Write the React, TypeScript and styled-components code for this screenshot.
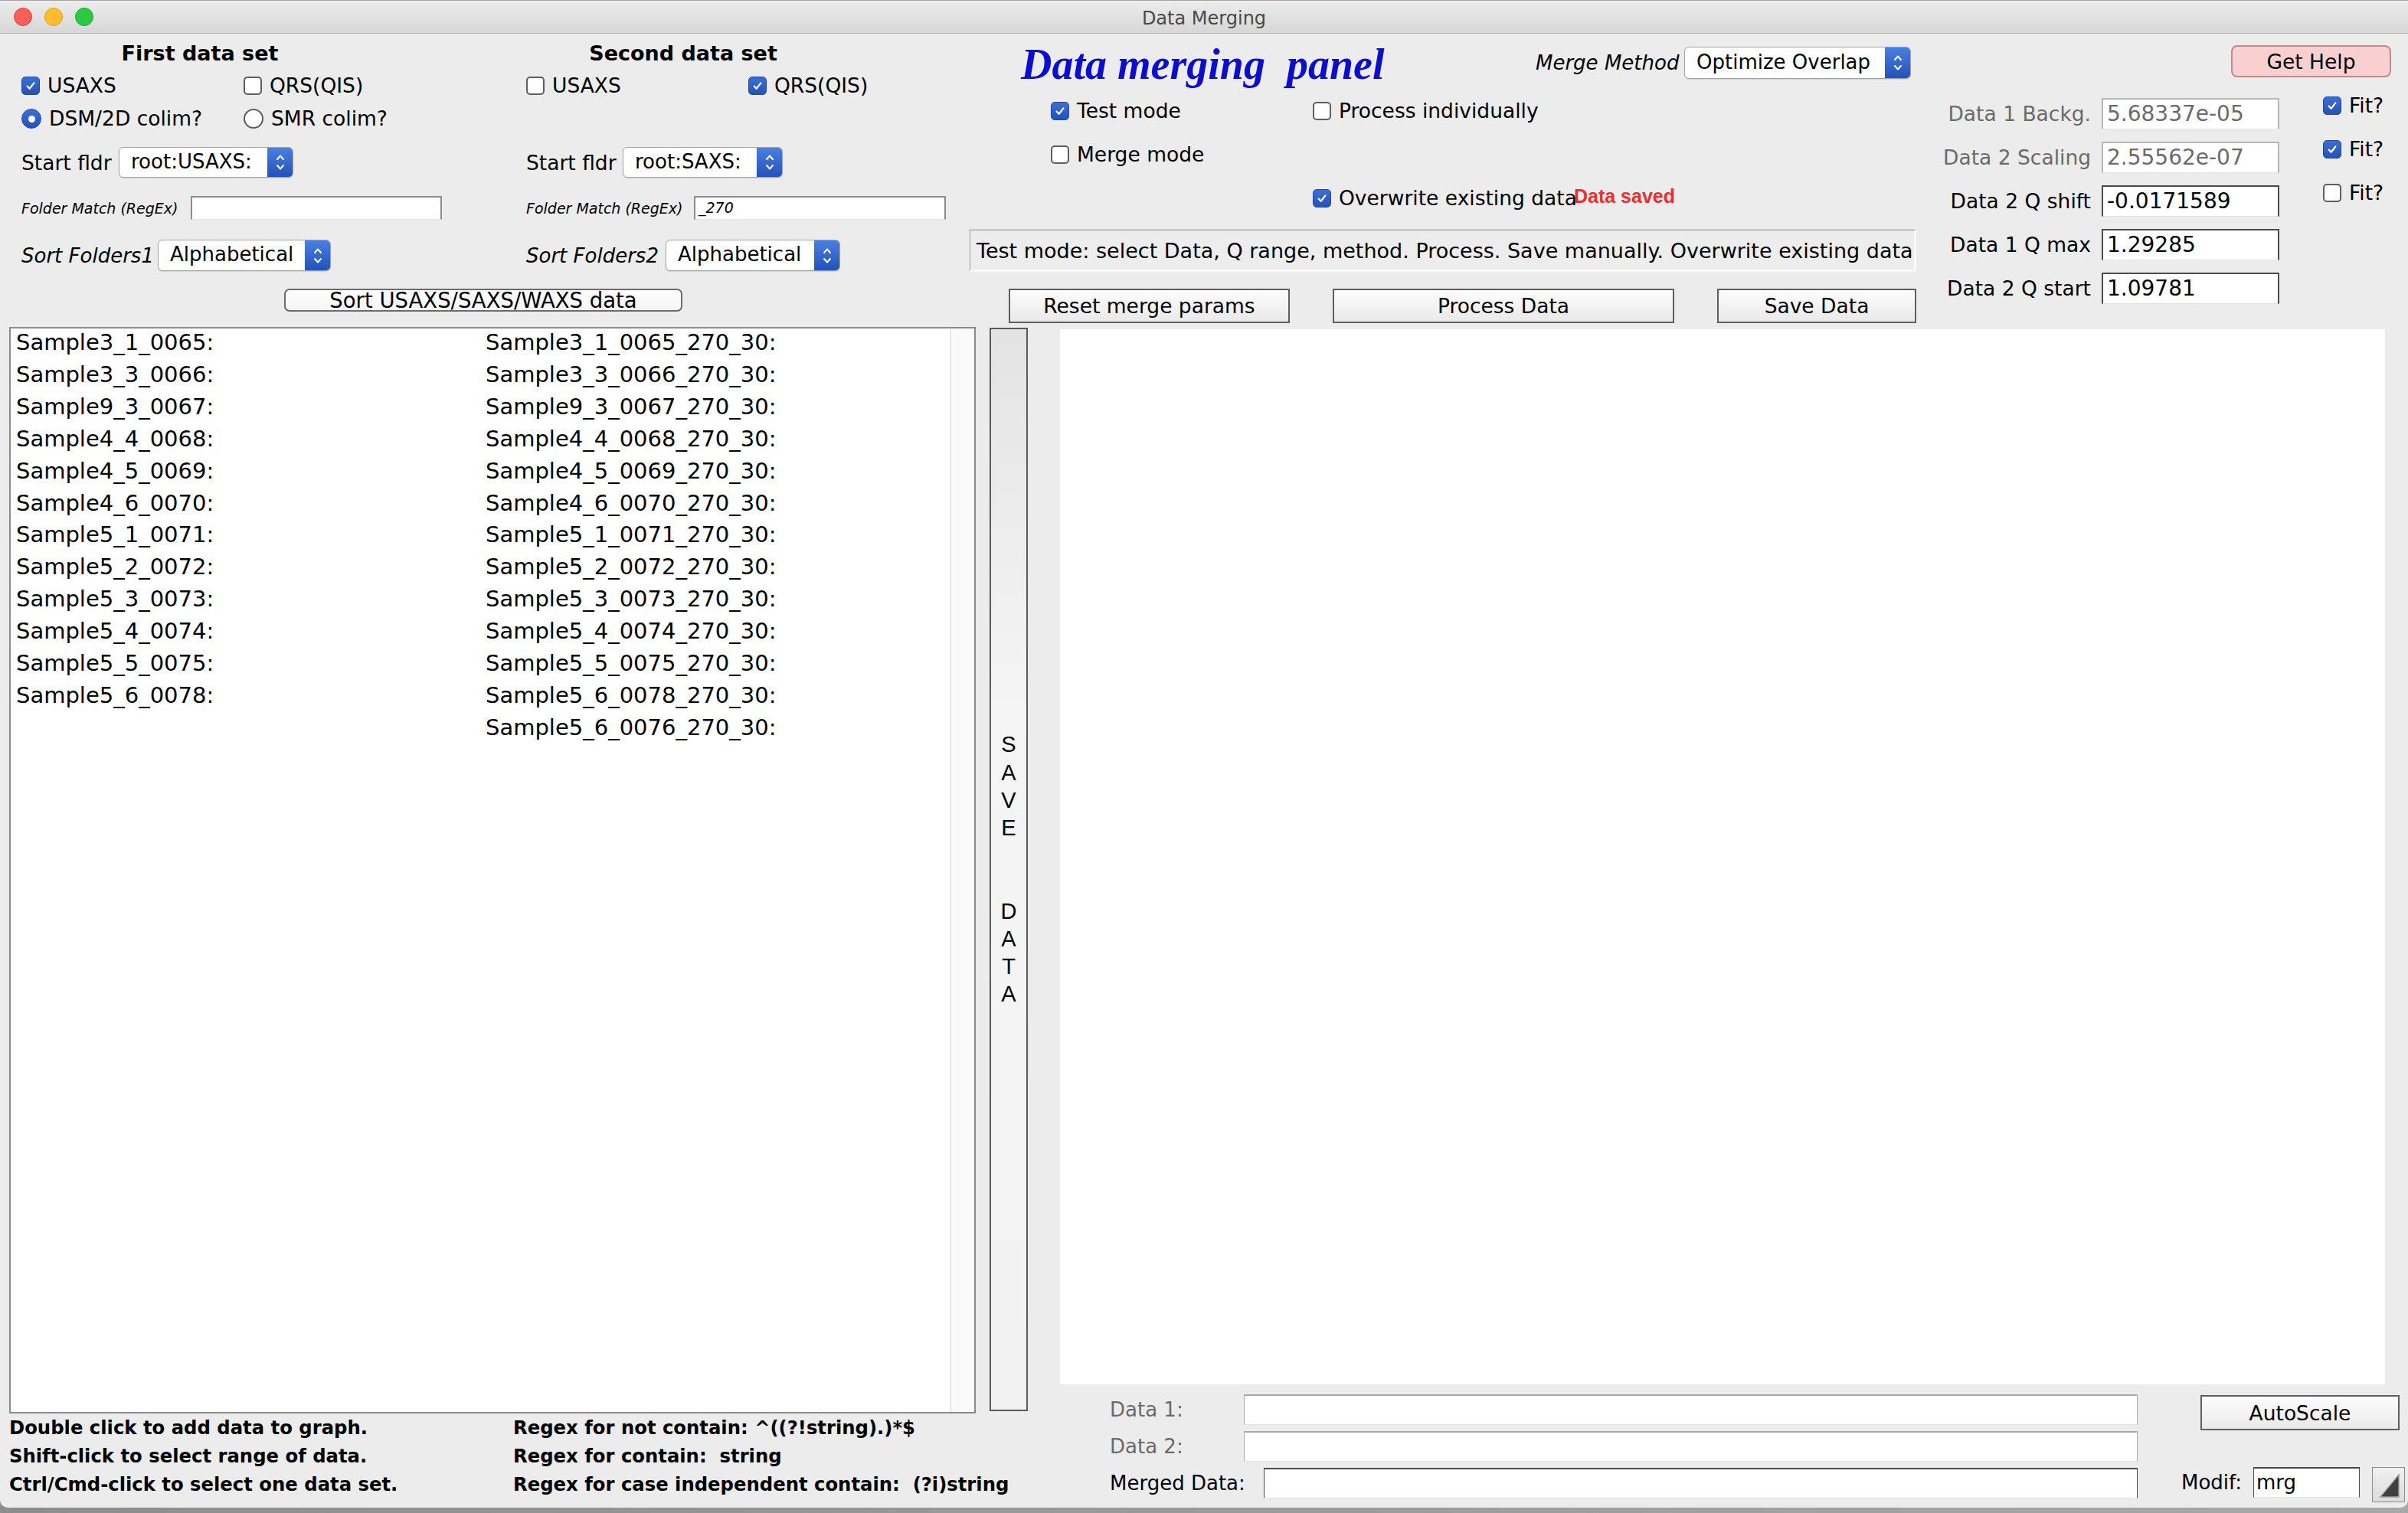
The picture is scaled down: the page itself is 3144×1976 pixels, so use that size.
import React from "react";
import styled, { createGlobalStyle } from "styled-components";

const GlobalStyle = createGlobalStyle`
  * { box-sizing: border-box; }
  html, body { margin: 0; padding: 0; }
  body {
    background: linear-gradient(90deg, #8d8d8d, #a8a8a8);
    font-family: "DejaVu Sans", Verdana, sans-serif;
    color: #000;
  }
`;

const Window = styled.div`
  width: 3144px;
  height: 1969px;
  background: #ececec;
  display: flex;
  flex-direction: column;
  overflow: hidden;
  border-radius: 0 0 10px 10px;
`;

/* ---------- title bar ---------- */
const TitleBar = styled.div`
  height: 44px;
  flex: none;
  display: grid;
  grid-template-columns: 1fr auto 1fr;
  align-items: center;
  background: linear-gradient(#ececec, #d7d7d7);
  border-top: 1px solid #a3a3a3;
  border-bottom: 1px solid #b3b3b3;
`;
const Lights = styled.div`
  display: flex;
  gap: 16px;
  margin-left: 18px;
`;
const Light = styled.span<{ $c: string; $b: string }>`
  width: 24px;
  height: 24px;
  border-radius: 50%;
  background: ${(p) => p.$c};
  border: 1px solid ${(p) => p.$b};
`;
const WindowTitle = styled.div`
  margin-top: 4px;
  font-size: 24px;
  color: #4a4a4a;
`;

/* ---------- shared controls ---------- */
const CheckItem = styled.label<{ $dim?: boolean }>`
  display: inline-flex;
  align-items: center;
  gap: 10px;
  font-size: 26.5px;
  line-height: 32px;
  white-space: nowrap;
  color: ${(p) => (p.$dim ? "#6b6b6b" : "#000")};
`;
const Box = styled.span<{ $on?: boolean }>`
  width: 24px;
  height: 24px;
  flex: none;
  border-radius: 5px;
  display: inline-flex;
  align-items: center;
  justify-content: center;
  background: ${(p) => (p.$on ? "linear-gradient(#3b6fd6, #2552b6)" : "#fff")};
  border: ${(p) => (p.$on ? "1px solid #22499f" : "2px solid #5e5e5e")};
`;
const RadioDot = styled.span<{ $on?: boolean }>`
  width: 26px;
  height: 26px;
  flex: none;
  border-radius: 50%;
  display: inline-flex;
  align-items: center;
  justify-content: center;
  background: ${(p) => (p.$on ? "linear-gradient(#3b6fd6, #2552b6)" : "#fff")};
  border: ${(p) => (p.$on ? "1px solid #22499f" : "2px solid #5e5e5e")};
  &::after {
    content: "";
    width: 9px;
    height: 9px;
    border-radius: 50%;
    background: #fff;
    display: ${(p) => (p.$on ? "block" : "none")};
  }
`;

const CheckMark = () => (
  <svg width="16" height="16" viewBox="0 0 16 16">
    <path d="M3.6 8.6 L6.6 11.8 L12.4 4.4" fill="none" stroke="#fff" strokeWidth="2.2" strokeLinecap="round" strokeLinejoin="round" />
  </svg>
);

const Check: React.FC<{ on?: boolean; label: string; dim?: boolean }> = ({ on, label, dim }) => (
  <CheckItem $dim={dim}>
    <Box $on={on}>{on && <CheckMark />}</Box>
    {label}
  </CheckItem>
);

const Radio: React.FC<{ on?: boolean; label: string }> = ({ on, label }) => (
  <CheckItem>
    <RadioDot $on={on} />
    {label}
  </CheckItem>
);

const PopupBox = styled.div<{ $w: number; $h?: number }>`
  width: ${(p) => p.$w}px;
  height: ${(p) => p.$h ?? 40}px;
  flex: none;
  display: flex;
  background: #fff;
  border: 1.5px solid #a3a3a3;
  border-radius: 6px;
  overflow: hidden;
  box-shadow: 0 1px 1px rgba(0, 0, 0, 0.12);
`;
const PopupText = styled.span`
  flex: 1;
  display: flex;
  align-items: center;
  padding-left: 15px;
  font-size: 26px;
  white-space: nowrap;
  padding-bottom: 3px;
`;
const PopupArrow = styled.span`
  width: 33px;
  flex: none;
  display: flex;
  align-items: center;
  justify-content: center;
  background: linear-gradient(#4a7fe2, #2352b9);
`;
const Chevrons = () => (
  <svg width="14" height="28" viewBox="0 0 14 28">
    <path d="M3 10 L7 5.5 L11 10 M3 18 L7 22.5 L11 18" fill="none" stroke="#fff" strokeWidth="2" strokeLinecap="round" strokeLinejoin="round" />
  </svg>
);
const Popup: React.FC<{ w: number; h?: number; text: string }> = ({ w, h, text }) => (
  <PopupBox $w={w} $h={h}>
    <PopupText>{text}</PopupText>
    <PopupArrow>
      <Chevrons />
    </PopupArrow>
  </PopupBox>
);

const PushButton = styled.div<{ $w: number; $h?: number }>`
  width: ${(p) => p.$w}px;
  height: ${(p) => p.$h ?? 45}px;
  flex: none;
  display: flex;
  align-items: center;
  justify-content: center;
  font-size: 26.5px;
  white-space: nowrap;
  background: linear-gradient(#fdfdfd, #e9e9e9);
  border: 2px solid #5f5f5f;
`;

/* ---------- top left: data sets ---------- */
const TopArea = styled.div`
  height: 383px;
  flex: none;
  display: flex;
  align-items: flex-start;
`;
const DataSetsGrid = styled.div`
  width: 1265px;
  flex: none;
  padding: 6px 0 0 28px;
  display: grid;
  grid-template-columns: 659px 1fr;
  grid-template-rows: 40px 43px 44px 70px 49px 75px 42px;
  align-items: center;
`;
const SetHeader = styled.div<{ $w: number }>`
  width: ${(p) => p.$w}px;
  text-align: center;
  font-size: 27px;
  font-weight: 700;
  line-height: 40px;
`;
const PairRow = styled.div`
  display: grid;
  grid-template-columns: 290px auto;
  align-items: center;
`;
const FieldLine = styled.div`
  display: flex;
  align-items: center;
`;
const PlainLabel = styled.span<{ $w: number }>`
  width: ${(p) => p.$w}px;
  flex: none;
  font-size: 26.5px;
  white-space: nowrap;
`;
const SmallItalic = styled.span<{ $w: number }>`
  width: ${(p) => p.$w}px;
  flex: none;
  font-size: 19px;
  font-style: italic;
  white-space: nowrap;
`;
const ItalicLabel = styled.span<{ $w: number }>`
  width: ${(p) => p.$w}px;
  flex: none;
  font-size: 26px;
  font-style: italic;
  white-space: nowrap;
`;
const SmallInput = styled.div<{ $w: number }>`
  width: ${(p) => p.$w}px;
  height: 31px;
  background: #fff;
  border: 2px solid #8c8c8c;
  border-bottom: 1px solid #e6e6e6;
  font-size: 19px;
  font-style: italic;
  padding-left: 4px;
  line-height: 27px;
`;
const SortButton = styled.div`
  grid-column: 1 / span 2;
  margin-left: 343px;
  width: 520px;
  height: 30px;
  display: flex;
  align-items: center;
  justify-content: center;
  font-size: 27.5px;
  background: linear-gradient(#ffffff, #f4f4f4);
  border: 2px solid #6c6c6c;
  border-radius: 7px;
`;

/* ---------- top right ---------- */
const MainControls = styled.div`
  width: 1237px;
  flex: none;
  display: flex;
  flex-direction: column;
`;
const TitleRow = styled.div`
  height: 81px;
  display: flex;
  justify-content: space-between;
  align-items: flex-start;
`;
const PanelTitle = styled.div`
  margin: 8px 0 0 68px;
  font-family: "Liberation Serif", "Times New Roman", serif;
  font-weight: 700;
  font-style: italic;
  font-size: 56px;
  line-height: 64px;
  color: #0d0dd0;
  white-space: pre;
`;
const MethodGroup = styled.div`
  margin: 17px 7px 0 0;
  display: flex;
  align-items: center;
  gap: 6px;
`;
const OptionsGrid = styled.div`
  padding-left: 107px;
  display: grid;
  grid-template-columns: 342px auto;
  grid-template-rows: 40px 40px 40px;
  row-gap: 17px;
  align-items: center;
`;
const OverwriteLine = styled.div`
  grid-column: 2;
  grid-row: 3;
  display: flex;
  align-items: baseline;
`;
const SavedNote = styled.span`
  margin-left: -4px;
  font-family: "Liberation Sans", Arial, sans-serif;
  font-weight: 700;
  font-size: 25px;
  color: #ef2d2d;
  position: relative;
  top: -2px;
`;
const StatusBox = styled.div`
  margin-top: 20px;
  height: 56px;
  display: flex;
  align-items: center;
  padding-left: 7px;
  font-size: 27px;
  white-space: nowrap;
  overflow: hidden;
  background: #ededed;
  border-top: 3px solid #c9c9c9;
  border-left: 3px solid #d2d2d2;
  border-bottom: 3px solid #f9f9f9;
  border-right: 3px solid #f9f9f9;
`;
const ButtonRow = styled.div`
  margin-top: 22px;
  padding-left: 52px;
  display: flex;
  gap: 56px;
`;

const ParamsArea = styled.div`
  flex: 1;
  display: flex;
  flex-direction: column;
`;
const HelpRow = styled.div`
  padding: 15px 22px 0 0;
  display: flex;
  justify-content: flex-end;
`;
const HelpButton = styled.div`
  width: 209px;
  height: 42px;
  display: flex;
  align-items: center;
  justify-content: center;
  font-size: 26.5px;
  background: #f9cfcf;
  border: 2px solid #bd8c8c;
  border-radius: 8px;
`;
const ParamGrid = styled.div`
  margin-top: 27px;
  display: grid;
  grid-template-columns: 242px 232px auto;
  grid-auto-rows: 41px;
  row-gap: 16px;
`;
const ParamLabel = styled.span<{ $dim?: boolean }>`
  padding-right: 14px;
  text-align: right;
  font-size: 26.5px;
  line-height: 41px;
  white-space: nowrap;
  color: ${(p) => (p.$dim ? "#6b6b6b" : "#000")};
`;
const ParamInput = styled.div<{ $dim?: boolean }>`
  height: 41px;
  background: #fff;
  font-size: 28px;
  line-height: 37px;
  padding-left: 5px;
  white-space: nowrap;
  color: ${(p) => (p.$dim ? "#6b6b6b" : "#000")};
  border: 2px solid ${(p) => (p.$dim ? "#b6b6b6" : "#4a4a4a")};
  border-bottom: 1px solid #e4e4e4;
`;
const FitCell = styled.div`
  margin: -6px 0 0 57px;
  align-self: start;
`;

/* ---------- main area ---------- */
const MainArea = styled.div`
  flex: 1;
  display: flex;
  align-items: flex-start;
`;
const LeftCol = styled.div`
  margin-left: 12px;
  width: 1262px;
  flex: none;
  display: flex;
  flex-direction: column;
`;
const ListBox = styled.div`
  height: 1419px;
  display: flex;
  background: #fff;
  border: 2px solid #8a8a8a;
`;
const ListContent = styled.div`
  flex: 1;
  display: flex;
  padding-left: 7px;
  margin-top: -2px;
  font-size: 29px;
  line-height: 41.9px;
`;
const ListColumn = styled.div<{ $w?: number }>`
  width: ${(p) => (p.$w ? `${p.$w}px` : "auto")};
  flex: none;
  display: flex;
  flex-direction: column;
  white-space: nowrap;
`;
const ScrollTrack = styled.div`
  width: 31px;
  flex: none;
  background: #fafafa;
  border-left: 1px solid #d6d6d6;
`;
const HelpGrid = styled.div`
  display: grid;
  grid-template-columns: 658px auto;
  font-size: 24.3px;
  font-weight: 700;
  line-height: 37px;
  white-space: pre;
`;
const SaveDataButton = styled.div`
  margin: 1px 0 0 18px;
  width: 50px;
  height: 1415px;
  flex: none;
  display: flex;
  align-items: center;
  justify-content: center;
  text-align: center;
  white-space: pre-line;
  font-family: "Liberation Sans", Arial, sans-serif;
  font-size: 29px;
  line-height: 36.2px;
  background: linear-gradient(#e3e3e3, #f5f5f5 35%, #f2f2f2);
  border: 2px solid #5a5a5a;
`;
const GraphCol = styled.div`
  margin: 3px 0 0 42px;
  flex: 1;
  display: flex;
  flex-direction: column;
`;
const Graph = styled.div`
  width: 1730px;
  height: 1378px;
  background: #fff;
`;
const FieldsArea = styled.div`
  margin-top: 13px;
  display: flex;
`;
const FieldsLeft = styled.div`
  margin-left: 65px;
  width: 1342px;
  flex: none;
  display: flex;
  flex-direction: column;
  gap: 8px;
`;
const FieldRow = styled.div`
  height: 40px;
  display: flex;
  align-items: center;
`;
const FieldLabel = styled.span<{ $w: number; $dim?: boolean }>`
  width: ${(p) => p.$w}px;
  flex: none;
  font-size: 26px;
  white-space: nowrap;
  color: ${(p) => (p.$dim ? "#6b6b6b" : "#000")};
`;
const FieldInput = styled.div<{ $dim?: boolean; $w?: number }>`
  ${(p) => (p.$w ? `width: ${p.$w}px; flex: none;` : "flex: 1;")}
  height: 40px;
  background: #fff;
  font-size: 26px;
  line-height: 36px;
  padding-left: 3px;
  border: 2px solid ${(p) => (p.$dim ? "#a9a9a9" : "#4a4a4a")};
  border-left-width: 1.5px;
  border-right-width: 1.5px;
  border-bottom: 1px solid #e4e4e4;
`;
const FieldsRight = styled.div`
  margin-left: 57px;
  flex: 1;
  display: flex;
  flex-direction: column;
`;
const AutoScaleButton = styled(PushButton)`
  margin: 1px 0 0 25px;
`;
const ModifRow = styled.div`
  margin-top: 48px;
  display: flex;
  align-items: flex-start;
`;
const ModifLabel = styled.span`
  width: 94px;
  flex: none;
  font-size: 26px;
  line-height: 40px;
`;
const CornerButton = styled.div`
  margin-left: 16px;
  width: 43px;
  height: 46px;
  flex: none;
  display: flex;
  align-items: center;
  justify-content: center;
  background: linear-gradient(#f0f0f0, #dcdcdc);
  border: 1.5px solid #8c8c8c;
`;

const col1 = [
  "Sample3_1_0065:",
  "Sample3_3_0066:",
  "Sample9_3_0067:",
  "Sample4_4_0068:",
  "Sample4_5_0069:",
  "Sample4_6_0070:",
  "Sample5_1_0071:",
  "Sample5_2_0072:",
  "Sample5_3_0073:",
  "Sample5_4_0074:",
  "Sample5_5_0075:",
  "Sample5_6_0078:",
];
const col2 = [
  ...col1.map((s) => s.replace(":", "_270_30:")),
  "Sample5_6_0076_270_30:",
];

const params = [
  { label: "Data 1 Backg.", value: "5.68337e-05", dim: true, fit: true },
  { label: "Data 2 Scaling", value: "2.55562e-07", dim: true, fit: true },
  { label: "Data 2 Q shift", value: "-0.0171589", dim: false, fit: false },
  { label: "Data 1 Q max", value: "1.29285", dim: false },
  { label: "Data 2 Q start", value: "1.09781", dim: false },
];

export default function App() {
  return (
    <>
      <GlobalStyle />
      <Window>
        <TitleBar>
          <Lights>
            <Light $c="#fd5f57" $b="#e0443e" />
            <Light $c="#febc2e" $b="#dea123" />
            <Light $c="#29c940" $b="#1aab29" />
          </Lights>
          <WindowTitle>Data Merging</WindowTitle>
          <span />
        </TitleBar>

        <TopArea>
          <DataSetsGrid>
            <SetHeader $w={466}>First data set</SetHeader>
            <SetHeader $w={410}>Second data set</SetHeader>

            <PairRow>
              <Check on label="USAXS" />
              <Check label="QRS(QIS)" />
            </PairRow>
            <PairRow>
              <Check label="USAXS" />
              <Check on label="QRS(QIS)" />
            </PairRow>

            <PairRow>
              <Radio on label="DSM/2D colim?" />
              <Radio label="SMR colim?" />
            </PairRow>
            <div />

            <FieldLine>
              <PlainLabel $w={127}>Start fldr</PlainLabel>
              <Popup w={228} text="root:USAXS:" />
            </FieldLine>
            <FieldLine>
              <PlainLabel $w={126}>Start fldr</PlainLabel>
              <Popup w={209} text="root:SAXS:" />
            </FieldLine>

            <FieldLine>
              <SmallItalic $w={221}>Folder Match (RegEx)</SmallItalic>
              <SmallInput $w={328} />
            </FieldLine>
            <FieldLine>
              <SmallItalic $w={219}>Folder Match (RegEx)</SmallItalic>
              <SmallInput $w={329}>_270</SmallInput>
            </FieldLine>

            <FieldLine>
              <ItalicLabel $w={178}>Sort Folders1</ItalicLabel>
              <Popup w={226} h={41} text="Alphabetical" />
            </FieldLine>
            <FieldLine>
              <ItalicLabel $w={182}>Sort Folders2</ItalicLabel>
              <Popup w={228} h={41} text="Alphabetical" />
            </FieldLine>

            <SortButton>Sort USAXS/SAXS/WAXS data</SortButton>
          </DataSetsGrid>

          <MainControls>
            <TitleRow>
              <PanelTitle>{"Data merging  panel"}</PanelTitle>
              <MethodGroup>
                <ItalicLabel $w={188}>Merge Method</ItalicLabel>
                <Popup w={296} h={42} text="Optimize Overlap" />
              </MethodGroup>
            </TitleRow>
            <OptionsGrid>
              <Check on label="Test mode" />
              <Check label="Process individually" />
              <Check label="Merge mode" />
              <div />
              <OverwriteLine>
                <Check on label="Overwrite existing data" />
                <SavedNote>Data saved</SavedNote>
              </OverwriteLine>
            </OptionsGrid>
            <StatusBox>
              Test mode: select Data, Q range, method. Process. Save manually. Overwrite existing data
            </StatusBox>
            <ButtonRow>
              <PushButton $w={367}>Reset merge params</PushButton>
              <PushButton $w={446}>Process Data</PushButton>
              <PushButton $w={260}>Save Data</PushButton>
            </ButtonRow>
          </MainControls>

          <ParamsArea>
            <HelpRow>
              <HelpButton>Get Help</HelpButton>
            </HelpRow>
            <ParamGrid>
              {params.map((p) => (
                <React.Fragment key={p.label}>
                  <ParamLabel $dim={p.dim}>{p.label}</ParamLabel>
                  <ParamInput $dim={p.dim}>{p.value}</ParamInput>
                  <FitCell>{p.fit !== undefined && <Check on={p.fit} label="Fit?" />}</FitCell>
                </React.Fragment>
              ))}
            </ParamGrid>
          </ParamsArea>
        </TopArea>

        <MainArea>
          <LeftCol>
            <ListBox>
              <ListContent>
                <ListColumn $w={613}>
                  {col1.map((s) => (
                    <span key={s}>{s}</span>
                  ))}
                </ListColumn>
                <ListColumn>
                  {col2.map((s) => (
                    <span key={s}>{s}</span>
                  ))}
                </ListColumn>
              </ListContent>
              <ScrollTrack />
            </ListBox>
            <HelpGrid>
              <span>Double click to add data to graph.</span>
              <span>Regex for not contain: ^((?!string).)*$</span>
              <span>Shift-click to select range of data.</span>
              <span>{"Regex for contain:  string"}</span>
              <span>Ctrl/Cmd-click to select one data set.</span>
              <span>{"Regex for case independent contain:  (?i)string"}</span>
            </HelpGrid>
          </LeftCol>

          <SaveDataButton>{"S\nA\nV\nE\n\u00a0\n\u00a0\nD\nA\nT\nA"}</SaveDataButton>

          <GraphCol>
            <Graph />
            <FieldsArea>
              <FieldsLeft>
                <FieldRow>
                  <FieldLabel $w={175} $dim>
                    Data 1:
                  </FieldLabel>
                  <FieldInput $dim />
                </FieldRow>
                <FieldRow>
                  <FieldLabel $w={175} $dim>
                    Data 2:
                  </FieldLabel>
                  <FieldInput $dim />
                </FieldRow>
                <FieldRow>
                  <FieldLabel $w={201}>Merged Data:</FieldLabel>
                  <FieldInput />
                </FieldRow>
              </FieldsLeft>
              <FieldsRight>
                <AutoScaleButton $w={260} $h={46}>
                  AutoScale
                </AutoScaleButton>
                <ModifRow>
                  <ModifLabel>Modif:</ModifLabel>
                  <FieldInput $w={139}>mrg</FieldInput>
                  <CornerButton>
                    <svg width="34" height="38" viewBox="0 0 34 38">
                      <polygon points="6,35 30,35 30,6" fill="#3f3f3f" stroke="#9a9a9a" strokeWidth="1.5" />
                    </svg>
                  </CornerButton>
                </ModifRow>
              </FieldsRight>
            </FieldsArea>
          </GraphCol>
        </MainArea>
      </Window>
    </>
  );
}
